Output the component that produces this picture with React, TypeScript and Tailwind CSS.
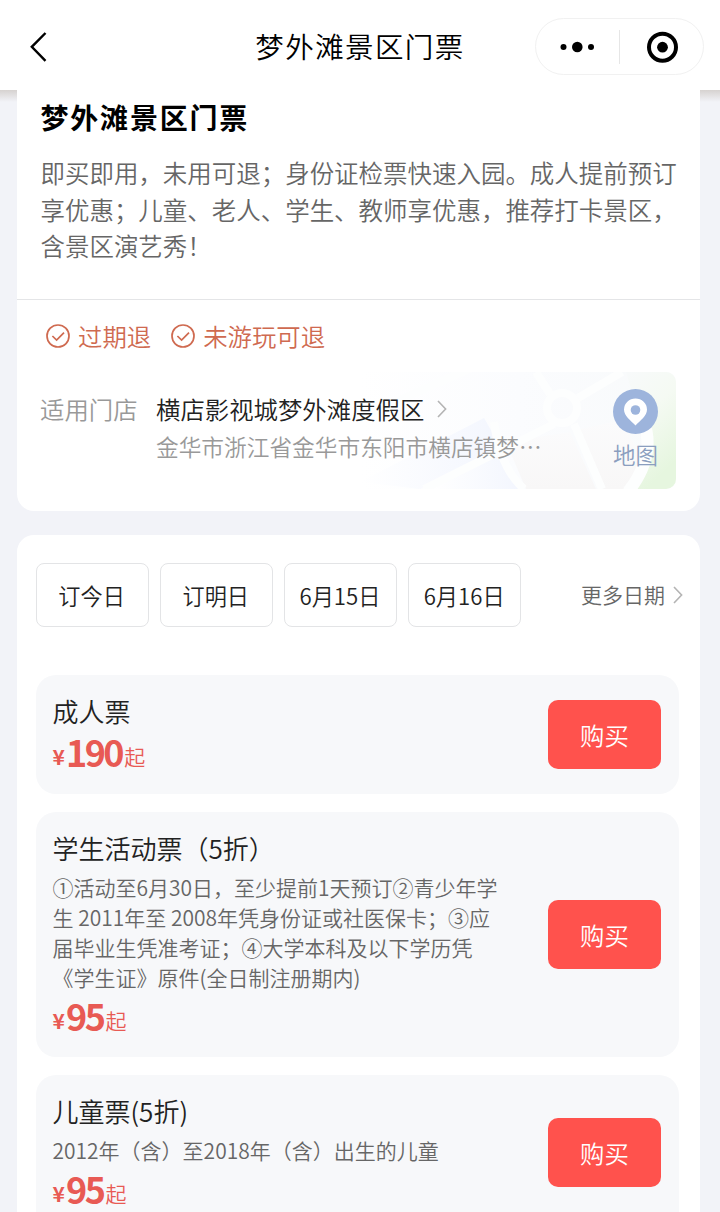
interface Ticket {
  id: string
  name: string
  lines: string[]
  price: number
}

const dates = ['订今日', '订明日', '6月15日', '6月16日']

const tickets: Ticket[] = [
  { id: 'adult', name: '成人票', lines: [], price: 190 },
  {
    id: 'student',
    name: '学生活动票（5折）',
    lines: [
      '①活动至6月30日，至少提前1天预订②青少年学',
      '生 2011年至 2008年凭身份证或社医保卡；③应',
      '届毕业生凭准考证；④大学本科及以下学历凭',
      '《学生证》原件(全日制注册期内)',
    ],
    price: 95,
  },
  { id: 'child', name: '儿童票(5折)', lines: ['2012年（含）至2018年（含）出生的儿童'], price: 95 },
]

function Chevron({ className }: { className: string }) {
  return (
    <svg className={className} width="10" height="18" viewBox="0 0 10 18" fill="none" stroke="currentColor" strokeWidth="1.6">
      <path d="M1 1l7.6 8L1 17" />
    </svg>
  )
}

function Header() {
  return (
    <header className="h-[90px] shrink-0 bg-white grid grid-cols-[1fr_auto_1fr] items-center px-4 pt-[3px]">
      <svg className="ml-[14px]" width="17" height="30" viewBox="0 0 17 30" fill="none" stroke="#000" strokeWidth="2.4">
        <path d="M15.5 1L1.8 14.8L15.5 28.8" />
      </svg>
      <h1 className="mb-px text-[28.5px] tracking-[1.4px] leading-[40px] text-black">梦外滩景区门票</h1>
      <div className="justify-self-end w-[169px] h-[57px] rounded-full border-[1.5px] border-[#f1f1f1] flex items-center">
        <svg width="166" height="54" viewBox="0 0 166 54">
          <circle cx="27.5" cy="27" r="3" />
          <circle cx="41.3" cy="27" r="5.3" />
          <circle cx="55" cy="27" r="3" />
          <path d="M83.5 10v34" stroke="#e6e6e6" />
          <circle cx="126.5" cy="27.2" r="13.5" fill="none" stroke="#000" strokeWidth="4" />
          <circle cx="126.5" cy="27.2" r="5.4" />
        </svg>
      </div>
    </header>
  )
}

function Promise({ text }: { text: string }) {
  return (
    <div className="flex items-center text-[#cf6a50]">
      <svg width="24" height="24" viewBox="0 0 24 24" fill="none" stroke="currentColor" strokeWidth="1.7">
        <circle cx="12" cy="12" r="11" />
        <path d="M6.4 12l4.2 4.1L18 8.6" />
      </svg>
      <span className="ml-2 text-[24.4px] leading-[40px]">{text}</span>
    </div>
  )
}

function MapArt() {
  return (
    <svg className="absolute right-0 top-0" width="316" height="117" viewBox="0 0 316 117">
      <defs>
        <linearGradient id="base" x1="0" x2="1" y1="0" y2="0">
          <stop offset="0" stopColor="#fff" />
          <stop offset="0.5" stopColor="#fbfcfe" />
          <stop offset="1" stopColor="#f8fafb" />
        </linearGradient>
        <linearGradient id="blue" x1="0" x2="1" y1="0" y2="0">
          <stop offset="0" stopColor="#fff" />
          <stop offset="1" stopColor="#f3f6fe" />
        </linearGradient>
        <linearGradient id="sand" x1="0" x2="0" y1="0" y2="1">
          <stop offset="0" stopColor="#fbfbfc" />
          <stop offset="1" stopColor="#f8f7f7" />
        </linearGradient>
        <linearGradient id="green" x1="0" x2="0.4" y1="0" y2="1">
          <stop offset="0" stopColor="#f8fafb" />
          <stop offset="0.45" stopColor="#f5faf3" />
          <stop offset="1" stopColor="#e6f6df" />
        </linearGradient>
      </defs>
      <rect width="316" height="117" fill="url(#base)" />
      <path d="M72 117L124 46L160 117z" fill="url(#blue)" />
      <path d="M0 110L124 46L140 74L60 117z" fill="url(#blue)" />
      <path d="M146 70L210 60L236 117H166z" fill="url(#sand)" />
      <path d="M216 58L262 48L284 92L266 117H240z" fill="url(#sand)" />
      <path d="M266 0H316V117H276Q290 88 286 66z" fill="url(#green)" />
      <g fill="none" stroke="#fdfefe" strokeWidth="8">
        <path d="M0 46L120 -8" />
        <path d="M134 50Q140 96 164 117" />
        <path d="M64 117L146 76L194 52" />
        <circle cx="202" cy="36" r="15" />
        <path d="M190 22L176 0M218 26L262 0M214 52L242 117" />
        <path d="M284 50Q296 84 268 120" strokeWidth="12" />
      </g>
    </svg>
  )
}

function Store() {
  return (
    <div className="relative mt-4 ml-[23px] mr-6 h-[116.5px] flex rounded-[10px] overflow-hidden">
      <MapArt />
      <div className="relative w-[116px] pt-[17.5px] text-[24.4px] leading-[38px] text-[#999]">适用门店</div>
      <div className="relative flex-1 pt-[17.5px]">
        <div className="flex items-center text-[24.4px] leading-[38px] text-[#222]">
          横店影视城梦外滩度假区
          <Chevron className="ml-[13px] text-[#b4b4b4]" />
        </div>
        <div className="mt-px text-[22.7px] leading-[36px] text-[#999] whitespace-nowrap">金华市浙江省金华市东阳市横店镇梦…</div>
      </div>
      <div className="relative w-[81px] pt-[17px] flex flex-col items-center">
        <svg width="45" height="45" viewBox="0 0 45 45">
          <circle cx="22.5" cy="22.5" r="22.5" fill="#9db4dc" />
          <path d="M22.5 36.5C17.5 31.5 11 27 11 20.6a11.5 11.2 0 0 1 23 0C34 27 27.5 31.5 22.5 36.5z" fill="#fff" />
          <circle cx="22.5" cy="21" r="4.8" fill="#9db4dc" />
        </svg>
        <span className="mt-[3px] text-[22.5px] leading-[34px] text-[#8b9ebf]">地图</span>
      </div>
    </div>
  )
}

function Summary() {
  return (
    <section className="bg-white rounded-b-[17px] pt-[7px] h-[421px]">
      <h2 className="px-[23.5px] text-[28px] tracking-[1.8px] leading-[41px] font-bold text-black">梦外滩景区门票</h2>
      <p className="mt-[17px] px-[23.5px] text-[24.47px] leading-[36.7px] text-[#666] whitespace-nowrap">
        即买即用，未用可退；身份证检票快速入园。成人提前预订
        <br />
        享优惠；儿童、老人、学生、教师享优惠，推荐打卡景区，
        <br />
        含景区演艺秀！
      </p>
      <hr className="mt-[34px] border-[#e4e5e7]" />
      <div className="mt-4 pl-[29px] flex gap-5">
        <Promise text="过期退" />
        <Promise text="未游玩可退" />
      </div>
      <Store />
    </section>
  )
}

function TicketCard({ ticket }: { ticket: Ticket }) {
  return (
    <div className="flex items-center justify-between rounded-[20px] bg-[#f7f8fa] pl-[17px] pr-[18px] py-[18px]">
      <div className="whitespace-nowrap">
        <h3 className="text-[26px] leading-[36px] text-[#222]">{ticket.name}</h3>
        {ticket.lines.length > 0 && (
          <div className="mt-[6px] mb-px text-[21px] leading-[30px] text-[#666]">
            {ticket.lines.map((line) => (
              <div key={line}>{line}</div>
            ))}
          </div>
        )}
        <div className="h-[46.5px] flex items-baseline leading-[45px] text-[#e85a54]">
          <span className="text-[21px] font-bold -translate-y-[2px]">¥</span>
          <span className="ml-px text-[36px] font-bold tracking-[-2.5px]">{ticket.price}</span>
          <span className="ml-[2px] text-[21px] -translate-y-[2.5px]">起</span>
        </div>
      </div>
      <button className="w-[113px] h-[69px] rounded-[10px] bg-[#ff524d] pt-0.5 text-[24.4px] text-white">购买</button>
    </div>
  )
}

export default function App() {
  return (
    <div
      lang="zh-CN"
      className="w-[720px] h-[1212px] overflow-hidden flex flex-col bg-[#f2f3f8] font-['Noto_Sans_CJK_SC',sans-serif] font-[350]"
    >
      <Header />
      <main className="flex-1 min-h-0 pl-[17px] pr-5 bg-[linear-gradient(to_bottom,#d6d2d0,#f2f3f8_12px)]">
        <Summary />
        <section className="mt-6 bg-white rounded-t-[17px] pt-7 pl-[18.5px] pr-[17px]">
          <div className="flex items-center justify-between">
            <div className="flex gap-[11px]">
              {dates.map((d) => (
                <button key={d} className="w-[113.2px] h-16 rounded-lg border border-[#e3e4e6] pt-px pr-px text-[22.2px] text-[#222]">
                  {d}
                </button>
              ))}
            </div>
            <div className="flex items-center text-[21px] text-[#666]">
              更多日期
              <Chevron className="ml-2 text-[#b4b4b4]" />
            </div>
          </div>
          <div className="mt-12 mr-1 flex flex-col gap-[18px]">
            {tickets.map((t) => (
              <TicketCard key={t.id} ticket={t} />
            ))}
          </div>
        </section>
      </main>
    </div>
  )
}
